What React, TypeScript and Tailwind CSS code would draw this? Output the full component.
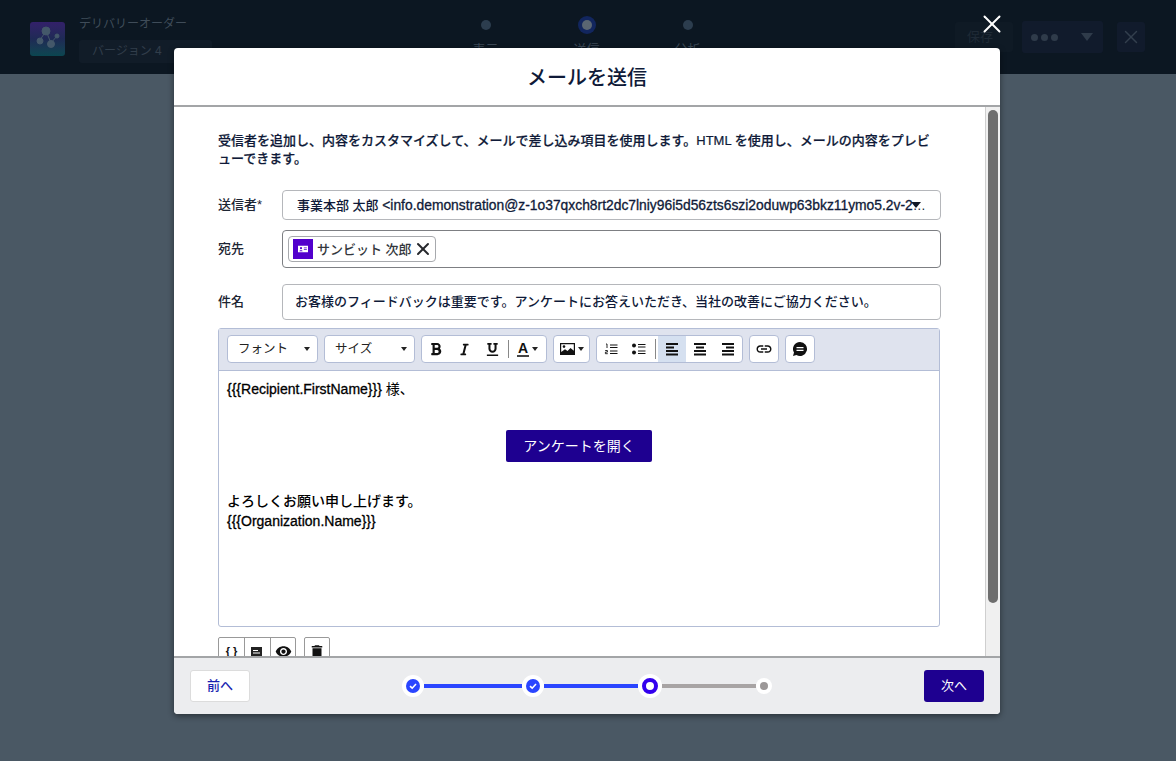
import { X } from "lucide-react";
import { FaBold, FaItalic, FaUnderline } from "react-icons/fa";
import { MdLink, MdVisibility, MdDelete } from "react-icons/md";

const caret = <span className="w-0 h-0 border-x-[3px] border-x-transparent border-t-[4px] border-t-[#222]" />;

function Logo() {
  return (
    <div className="w-[35px] h-[34px] rounded-[3px] bg-gradient-to-b from-[#33206a] via-[#1e2a55] to-[#0a4650] flex items-center justify-center">
      <svg width="24" height="26" viewBox="0 0 24 26" fill="#44586a" stroke="#44586a" strokeWidth="1">
        <path d="M4 14 L10 5 L15 17 L21 10" fill="none" />
        <circle cx="10" cy="5" r="4" />
        <circle cx="4" cy="15" r="3" />
        <circle cx="15" cy="18" r="3.5" />
        <circle cx="21" cy="10" r="2" />
      </svg>
    </div>
  );
}

function HeaderStep({ label, active }: { label: string; active?: boolean }) {
  return (
    <div className="w-[101px] flex flex-col items-center">
      <div className={`w-[18px] h-[18px] rounded-full flex items-center justify-center ${active ? "bg-[#12265e]" : ""}`}>
        <div className={`w-2.5 h-2.5 rounded-full ${active ? "bg-[#5a6672]" : "bg-[#2c3d4e]"}`} />
      </div>
      <div className="mt-[7px] text-[13px] leading-[18px] text-[#3b4855]">{label}</div>
    </div>
  );
}

function Field({ label, children, className }: { label: string; children: React.ReactNode; className?: string }) {
  return (
    <div className={`flex items-center ${className ?? ""}`}>
      <div className="w-[64px] text-[13px] font-medium text-[#1d2533]">{label}</div>
      <div className="w-[659px]">{children}</div>
    </div>
  );
}

function ToolBtn({ children, active }: { children: React.ReactNode; active?: boolean }) {
  return (
    <div className={`w-7 h-full shrink-0 flex items-center justify-center text-[#111] ${active ? "bg-[#d5e0f0]" : ""}`}>{children}</div>
  );
}

function Group({ children, className }: { children: React.ReactNode; className?: string }) {
  return (
    <div className={`h-7 bg-white border border-[#b3bdd6] rounded-[4px] flex items-center overflow-hidden ${className ?? ""}`}>
      {children}
    </div>
  );
}

function SelectBtn({ label }: { label: string }) {
  return (
    <Group className="w-[91px] justify-between pl-[10px] pr-[7px]">
      <span className="pt-px text-[12.5px] text-[#222]">{label}</span>
      {caret}
    </Group>
  );
}

// bars of the alignment icons, x offset and width per row
function AlignIcon({ rows }: { rows: [number, number][] }) {
  return (
    <svg width="14" height="13" viewBox="0 0 14 13" fill="#111">
      {rows.map(([x, w], i) => (
        <rect key={i} x={x} y={i * 3.5} width={w} height="2" />
      ))}
    </svg>
  );
}

function CheckDot() {
  return (
    <div className="relative z-10 w-[22px] h-[22px] rounded-full bg-white flex items-center justify-center">
      <div className="w-[14px] h-[14px] rounded-full bg-[#2a45ff] flex items-center justify-center">
        <svg width="10" height="10" viewBox="0 0 10 10" fill="none" stroke="#fff" strokeWidth="1.6">
          <path d="M2 5.2 L4.2 7.2 L8 3" />
        </svg>
      </div>
    </div>
  );
}

export default function App() {
  return (
    <div
      className="relative w-full h-[761px] overflow-hidden bg-[#4a5864]"
      style={{ fontFamily: '"Liberation Sans", "Noto Sans CJK JP", sans-serif' }}
    >
      {/* dimmed page behind the modal */}
      <div className="h-[74px] bg-[#0c1722] flex items-start justify-between pl-[30px] pr-[31px]">
        <div className="flex w-[188px] pt-[15px]">
          <div className="pt-[7px]">
            <Logo />
          </div>
          <div className="ml-[14px]">
            <div className="text-[12px] leading-[18px] whitespace-nowrap text-[#3f4c59]">デリバリーオーダー</div>
            <div className="mt-[7px] w-[133px] h-[23px] rounded-[3px] bg-[#111c28] pl-[13px] text-[12px] leading-[23px] text-[#313e4b]">
              バージョン 4
            </div>
          </div>
        </div>
        <div className="flex pt-[16px]">
          <HeaderStep label="表示" />
          <HeaderStep label="送信" active />
          <HeaderStep label="分析" />
        </div>
        <div className="flex items-center pt-[21px]">
          <div className="w-[58px] h-[30px] rounded-[3px] bg-[#0f1a25] text-[13px] leading-[30px] pl-[12px] text-[#1f2a36]">保存</div>
          <div className="ml-[9px] w-[81px] h-[32px] rounded-[3px] bg-[#111b2c] flex items-center justify-between pl-[9px] pr-[10px]">
            <div className="flex gap-[3px]">
              <div className="w-[7px] h-[7px] rounded-full bg-[#2f3b4a]" />
              <div className="w-[7px] h-[7px] rounded-full bg-[#2f3b4a]" />
              <div className="w-[7px] h-[7px] rounded-full bg-[#2f3b4a]" />
            </div>
            <div className="w-0 h-0 border-x-[6px] border-x-transparent border-t-[8px] border-t-[#2f3b4a]" />
          </div>
          <div className="ml-[14px] w-[28px] h-[30px] rounded-[3px] bg-[#111b2c] flex items-center justify-center text-[#333f4d]">
            <X size={22} strokeWidth={1.6} />
          </div>
        </div>
      </div>

      {/* modal overlay */}
      <div className="absolute inset-0 pl-[174px] pt-[48px]">
        <button className="absolute left-[977px] top-[9px] text-white">
          <X size={30} strokeWidth={1.6} />
        </button>
        <div className="w-[826px] h-[666px] bg-white rounded-[4px] overflow-hidden flex flex-col shadow-[0_2px_6px_rgba(0,0,0,0.45)]">
          <div className="h-[59px] shrink-0 pt-[2px] border-b-2 border-[#a3a5a7] flex items-center justify-center text-[20px] font-medium text-[#0f1a38]">
            メールを送信
          </div>

          <div className="flex flex-1 min-h-0">
            <div className="flex-1 min-w-0 overflow-hidden pl-[44px] pt-[25px]">
              <p className="text-[13px] leading-[18px] font-medium whitespace-nowrap text-[#0f1a38] [-webkit-text-stroke:0.2px]">
                受信者を追加し、内容をカスタマイズして、メールで差し込み項目を使用します。HTML を使用し、メールの内容をプレビ
                <br />
                ューできます。
              </p>

              <Field label="送信者*" className="mt-[22px]">
                <div className="relative h-[30px] border border-[#b5b7bb] rounded-[4px] pl-[14px] pr-[12px] flex items-center">
                  <span className="truncate text-[13px] font-medium text-[#0f1a38]">
                    事業本部 太郎 <span className="text-[13.85px] [-webkit-text-stroke:0.3px]">&lt;info.demonstration@z-1o37qxch8rt2dc7lniy96i5d56zts6szi2oduwp63bkz11ymo5.2v-2x.example.com&gt;</span>
                  </span>
                  <span className="absolute right-[19px] top-[11px] w-0 h-0 border-x-[5px] border-x-transparent border-t-[6px] border-t-[#111827]" />
                </div>
              </Field>

              <Field label="宛先" className="mt-[10px]">
                <div className="h-[38px] border border-[#7d7f83] rounded-[4px] pl-[5px] flex items-center">
                  <div className="h-[26px] w-[148px] border border-[#a7a9ad] rounded-[4px] flex items-center pl-[4px]">
                    <div className="w-5 h-5 bg-[#5200cc] flex items-center justify-center">
                      <svg width="12" height="10" viewBox="0 0 14 12" fill="#fff">
                        <path d="M1 2h12v8H1z" />
                        <circle cx="4.6" cy="5" r="1.3" fill="#5200cc" />
                        <path d="M2.6 8.6c.3-1.4 3.7-1.4 4 0z M8 4.2h3.6v1H8z M8 6.2h3.6v1H8z" fill="#5200cc" />
                      </svg>
                    </div>
                    <span className="ml-[4px] pt-px text-[13px] font-medium text-[#33373d] whitespace-nowrap">サンビット 次郎</span>
                    <X size={20} strokeWidth={2.4} className="ml-[1px] text-[#26282c]" />
                  </div>
                </div>
              </Field>

              <Field label="件名" className="mt-[16px]">
                <div className="h-[36px] border border-[#b5b7bb] rounded-[4px] pl-[12px] flex items-center text-[13px] font-medium text-[#0f1a38]">
                  お客様のフィードバックは重要です。アンケートにお答えいただき、当社の改善にご協力ください。
                </div>
              </Field>

              <div className="mt-[8px] w-[722px] h-[299px] border border-[#b3bdd6] rounded-[3px] flex flex-col">
                <div className="h-[42px] shrink-0 bg-[#dfe3ee] border-b border-[#b3bdd6] flex items-start gap-[6px] pl-[8px] pt-[6px]">
                  <SelectBtn label="フォント" />
                  <SelectBtn label="サイズ" />
                  <Group className="w-[126px]">
                    <ToolBtn><FaBold size={14} /></ToolBtn>
                    <ToolBtn><FaItalic size={13} /></ToolBtn>
                    <ToolBtn><FaUnderline size={13} /></ToolBtn>
                    <div className="ml-[2px] w-px h-[18px] bg-[#888]" />
                    <div className="flex-1 flex items-center justify-center gap-[3px]">
                      <span className="text-[14px] leading-[14px] font-bold text-[#111] border-b-2 border-[#444] px-px">A</span>
                      {caret}
                    </div>
                  </Group>
                  <Group className="w-[37px] justify-center gap-[3px]">
                    <svg width="15" height="12" viewBox="0 0 15 12">
                      <path d="M0 0h15v12H0z" fill="#111" />
                      <path d="M1.2 1.2h12.6v6.6L10.5 5 7.5 8 5 6.2 1.2 9z" fill="#fff" />
                      <circle cx="4" cy="3.6" r="1.3" fill="#111" />
                    </svg>
                    {caret}
                  </Group>
                  <Group className="w-[147px]">
                    <ToolBtn>
                      <svg width="14" height="12" viewBox="0 0 14 12" fill="none" stroke="#111">
                        <path d="M2 1h1v4 M1.2 7.5h2.2v1.6H1.4v1.6h2.4" strokeWidth="0.9" />
                        <path d="M6 2h7.5 M6 4.5h7.5 M6 8h7.5 M6 10.5h7.5" strokeWidth="1" />
                      </svg>
                    </ToolBtn>
                    <ToolBtn>
                      <svg width="14" height="12" viewBox="0 0 14 12" fill="none" stroke="#111">
                        <circle cx="2" cy="2.5" r="2" fill="#111" stroke="none" />
                        <circle cx="2" cy="9.5" r="2" fill="#111" stroke="none" />
                        <path d="M6 1.5h7.5 M6 4h7.5 M6 8h7.5 M6 10.5h7.5" strokeWidth="1" />
                      </svg>
                    </ToolBtn>
                    <div className="ml-[2px] mr-[2px] w-px h-[20px] bg-[#888]" />
                    <ToolBtn active>
                      <AlignIcon rows={[[1, 12], [1, 8], [1, 12], [1, 12]]} />
                    </ToolBtn>
                    <ToolBtn>
                      <AlignIcon rows={[[1, 12], [3, 8], [1, 12], [1, 12]]} />
                    </ToolBtn>
                    <ToolBtn>
                      <AlignIcon rows={[[1, 12], [5, 8], [1, 12], [1, 12]]} />
                    </ToolBtn>
                  </Group>
                  <Group className="w-[30px] justify-center">
                    <MdLink size={18} className="text-[#111]" />
                  </Group>
                  <Group className="w-[30px] justify-center">
                    <svg width="16" height="16" viewBox="0 0 16 16">
                      <path d="M8 1a7 7 0 1 1-3.6 13L1 15l1-3.4A7 7 0 0 1 8 1z" fill="#111" />
                      <path d="M4.5 6h7v1.3h-7z M4.5 8.8h7v1.3h-7z" fill="#fff" />
                    </svg>
                  </Group>
                </div>
                <div className="flex-1 px-[8px] pt-[10px] text-[14px] leading-[16px] text-black">
                  <div>
                    <span className="[-webkit-text-stroke:0.3px]">{"{{{Recipient.FirstName}}}"}</span> 様、
                  </div>
                  <div className="mt-[33px] flex justify-center">
                    <div className="w-[146px] h-[32px] rounded-[2px] bg-[#1e0090] text-white flex items-center justify-center">
                      アンケートを開く
                    </div>
                  </div>
                  <div className="mt-[31px] font-medium">よろしくお願い申し上げます。</div>
                  <div className="mt-[4px] [-webkit-text-stroke:0.3px]">{"{{{Organization.Name}}}"}</div>
                </div>
              </div>

              <div className="mt-[10px] flex gap-[8px]">
                <div className="h-[30px] w-[78px] border border-[#999] rounded-t-[2px] flex">
                  <div className="w-[26px] border-r border-[#999] pt-[3px] text-center text-[11px] leading-[20px] font-bold text-[#111]">{"{ }"}</div>
                  <div className="w-[26px] border-r border-[#999] flex justify-center pt-[8px]">
                    <svg width="13" height="14" viewBox="0 0 13 14">
                      <path d="M0 1h11v9.5L8 13H0z" fill="#222" />
                      <path d="M2 4h5v1H2z M2 6.5h7v1H2z" fill="#fff" />
                      <circle cx="11.5" cy="12.5" r="1.2" fill="#222" />
                    </svg>
                  </div>
                  <div className="flex-1 flex justify-center pt-[5px]">
                    <MdVisibility size={17} className="text-[#111]" />
                  </div>
                </div>
                <div className="h-[30px] w-[26px] border border-[#999] rounded-t-[2px] flex justify-center pt-[5px]">
                  <MdDelete size={18} className="text-[#111]" />
                </div>
              </div>
            </div>

            <div className="w-[15px] shrink-0 bg-[#f0f0f0] border-l border-[#cfcfcf] pl-[2px] pt-[3px]">
              <div className="w-[10px] h-[493px] rounded-full bg-[#6e6e6e]" />
            </div>
          </div>

          <div className="h-[58px] shrink-0 bg-[#ecedef] border-t-2 border-[#a3a5a7] flex items-center justify-between px-[16px]">
            <div className="w-[60px] h-[32px] bg-white border border-[#dcdcdc] rounded-[3px] text-[13px] font-medium text-[#1a1fb0] flex items-center justify-center">
              前へ
            </div>
            <div className="flex items-center">
              <CheckDot />
              <div className="w-[98px] h-1 bg-[#2a45ff]" />
              <CheckDot />
              <div className="w-[94px] h-1 bg-[#2a45ff]" />
              <div className="w-6 h-6 rounded-full bg-white flex items-center justify-center">
                <div className="w-4 h-4 rounded-full border-[4px] border-[#3300ee] bg-white" />
              </div>
              <div className="w-[94px] h-1 bg-[#a8a4a4]" />
              <div className="w-4 h-4 rounded-full bg-white flex items-center justify-center">
                <div className="w-2 h-2 rounded-full bg-[#9c9898]" />
              </div>
            </div>
            <div className="w-[60px] h-[32px] bg-[#1e0090] rounded-[3px] text-[13px] text-white flex items-center justify-center">
              次へ
            </div>
          </div>
        </div>
      </div>
    </div>
  );
}
